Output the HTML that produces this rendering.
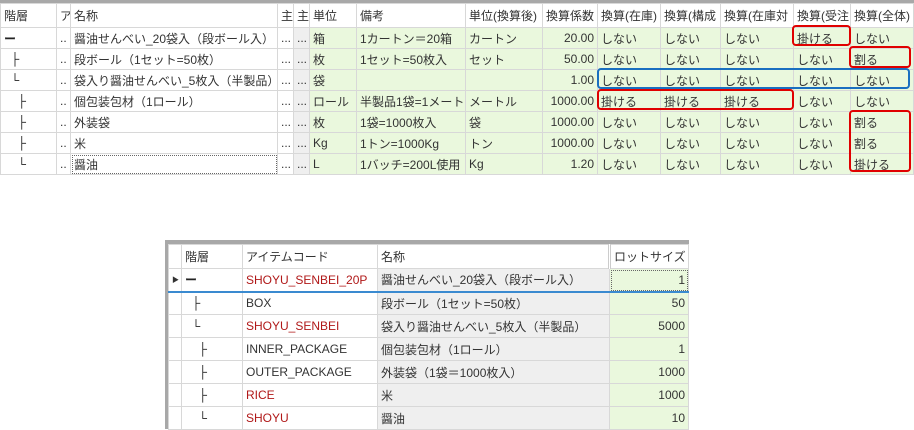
<!DOCTYPE html>
<html><head><meta charset="utf-8"><style>
*{margin:0;padding:0;box-sizing:border-box}
body{width:914px;height:429px;background:#fff;position:relative;overflow:hidden;font-family:"Liberation Sans","Noto Sans CJK JP",sans-serif;font-size:12px;color:#333}
table{border-collapse:collapse;table-layout:fixed;position:absolute}
td{border:1px solid #d8d8d8;white-space:nowrap;overflow:hidden;padding:0 3px;height:21px}
.g{background:#eaf8dd}
.r{text-align:right}
.h td{background:#fff;height:24px}
.gr{background:#efefef}
.red{color:#b01818}
.t{font-weight:bold;color:#222}
.box{position:absolute;border:2px solid #e00000;border-radius:4px}
</style></head><body>
<div style="position:absolute;left:0;top:0;width:914px;height:3px;background:#a8a8a8"></div>
<table style="left:0;top:3px;width:913px">
<colgroup><col style="width:56px"><col style="width:14px"><col style="width:207px"><col style="width:16px"><col style="width:16px"><col style="width:47px"><col style="width:109px"><col style="width:77px"><col style="width:55px"><col style="width:63px"><col style="width:60px"><col style="width:73px"><col style="width:57px"><col style="width:63px"></colgroup>
<tr class="h"><td>階層</td><td>ア</td><td>名称</td><td>主</td><td>主</td><td>単位</td><td>備考</td><td>単位(換算後)</td><td>換算係数</td><td>換算(在庫)</td><td>換算(構成</td><td>換算(在庫対</td><td>換算(受注</td><td>換算(全体)</td></tr>
<tr><td class="t">ー</td><td>..</td><td>醤油せんべい_20袋入（段ボール入）</td><td>...</td><td class="gr">...</td><td class="g">箱</td><td class="g">1カートン＝20箱</td><td class="g">カートン</td><td class="g r">20.00</td><td class="g">しない</td><td class="g">しない</td><td class="g">しない</td><td class="g">掛ける</td><td class="g">しない</td></tr>
<tr><td class="t">&nbsp;&nbsp;├</td><td>..</td><td>段ボール（1セット=50枚）</td><td>...</td><td class="gr">...</td><td class="g">枚</td><td class="g">1セット=50枚入</td><td class="g">セット</td><td class="g r">50.00</td><td class="g">しない</td><td class="g">しない</td><td class="g">しない</td><td class="g">しない</td><td class="g">割る</td></tr>
<tr><td class="t">&nbsp;&nbsp;└</td><td>..</td><td>袋入り醤油せんべい_5枚入（半製品）</td><td>...</td><td class="gr">...</td><td class="g">袋</td><td class="g"></td><td class="g"></td><td class="g r">1.00</td><td class="g">しない</td><td class="g">しない</td><td class="g">しない</td><td class="g">しない</td><td class="g">しない</td></tr>
<tr><td class="t">&nbsp;&nbsp;&nbsp;&nbsp;├</td><td>..</td><td>個包装包材（1ロール）</td><td>...</td><td class="gr">...</td><td class="g">ロール</td><td class="g">半製品1袋=1メートル</td><td class="g">メートル</td><td class="g r">1000.00</td><td class="g">掛ける</td><td class="g">掛ける</td><td class="g">掛ける</td><td class="g">しない</td><td class="g">しない</td></tr>
<tr><td class="t">&nbsp;&nbsp;&nbsp;&nbsp;├</td><td>..</td><td>外装袋</td><td>...</td><td class="gr">...</td><td class="g">枚</td><td class="g">1袋=1000枚入</td><td class="g">袋</td><td class="g r">1000.00</td><td class="g">しない</td><td class="g">しない</td><td class="g">しない</td><td class="g">しない</td><td class="g">割る</td></tr>
<tr><td class="t">&nbsp;&nbsp;&nbsp;&nbsp;├</td><td>..</td><td>米</td><td>...</td><td class="gr">...</td><td class="g">Kg</td><td class="g">1トン=1000Kg</td><td class="g">トン</td><td class="g r">1000.00</td><td class="g">しない</td><td class="g">しない</td><td class="g">しない</td><td class="g">しない</td><td class="g">割る</td></tr>
<tr><td class="t">&nbsp;&nbsp;&nbsp;&nbsp;└</td><td>..</td><td style="outline:1px dotted #666;outline-offset:-2px">醤油</td><td>...</td><td class="gr">...</td><td class="g">L</td><td class="g">1バッチ=200L使用</td><td class="g">Kg</td><td class="g r">1.20</td><td class="g">しない</td><td class="g">しない</td><td class="g">しない</td><td class="g">しない</td><td class="g">掛ける</td></tr>
</table>
<div class="box" style="left:792px;top:25px;width:59px;height:21px"></div>
<div class="box" style="left:849px;top:46px;width:62px;height:22px"></div>
<div class="box" style="left:597px;top:89px;width:197px;height:21px"></div>
<div class="box" style="left:849px;top:110px;width:62px;height:62px"></div>
<div class="box" style="left:597px;top:68px;width:313px;height:21px;border-color:#1a6fc0"></div>

<div style="position:absolute;left:165px;top:240px;width:524px;height:189px;background:#a8a8a8"></div>
<table style="left:168px;top:244px;width:520px;background:#fff">
<colgroup><col style="width:13px"><col style="width:61px"><col style="width:135px"><col style="width:232px"><col style="width:79px"></colgroup>
<tr class="h"><td></td><td>階層</td><td>アイテムコード</td><td>名称</td><td style="border-left:3px double #ccc">ロットサイズ</td></tr>
<tr style="height:23px"><td style="font-size:7px">▶</td><td class="t">ー</td><td class="red">SHOYU_SENBEI_20P</td><td class="gr">醤油せんべい_20袋入（段ボール入）</td><td class="g r" style="outline:1px dotted #666;outline-offset:-2px">1</td></tr>
<tr style="height:23px;border-top:2px solid #3a8ad0"><td></td><td class="t">&nbsp;&nbsp;├</td><td>BOX</td><td class="gr">段ボール（1セット=50枚）</td><td class="g r">50</td></tr>
<tr style="height:23px"><td></td><td class="t">&nbsp;&nbsp;└</td><td class="red">SHOYU_SENBEI</td><td class="gr">袋入り醤油せんべい_5枚入（半製品）</td><td class="g r">5000</td></tr>
<tr style="height:23px"><td></td><td class="t">&nbsp;&nbsp;&nbsp;&nbsp;├</td><td>INNER_PACKAGE</td><td class="gr">個包装包材（1ロール）</td><td class="g r">1</td></tr>
<tr style="height:23px"><td></td><td class="t">&nbsp;&nbsp;&nbsp;&nbsp;├</td><td>OUTER_PACKAGE</td><td class="gr">外装袋（1袋＝1000枚入）</td><td class="g r">1000</td></tr>
<tr style="height:23px"><td></td><td class="t">&nbsp;&nbsp;&nbsp;&nbsp;├</td><td class="red">RICE</td><td class="gr">米</td><td class="g r">1000</td></tr>
<tr style="height:23px"><td></td><td class="t">&nbsp;&nbsp;&nbsp;&nbsp;└</td><td class="red">SHOYU</td><td class="gr">醤油</td><td class="g r">10</td></tr>
</table>
</body></html>
